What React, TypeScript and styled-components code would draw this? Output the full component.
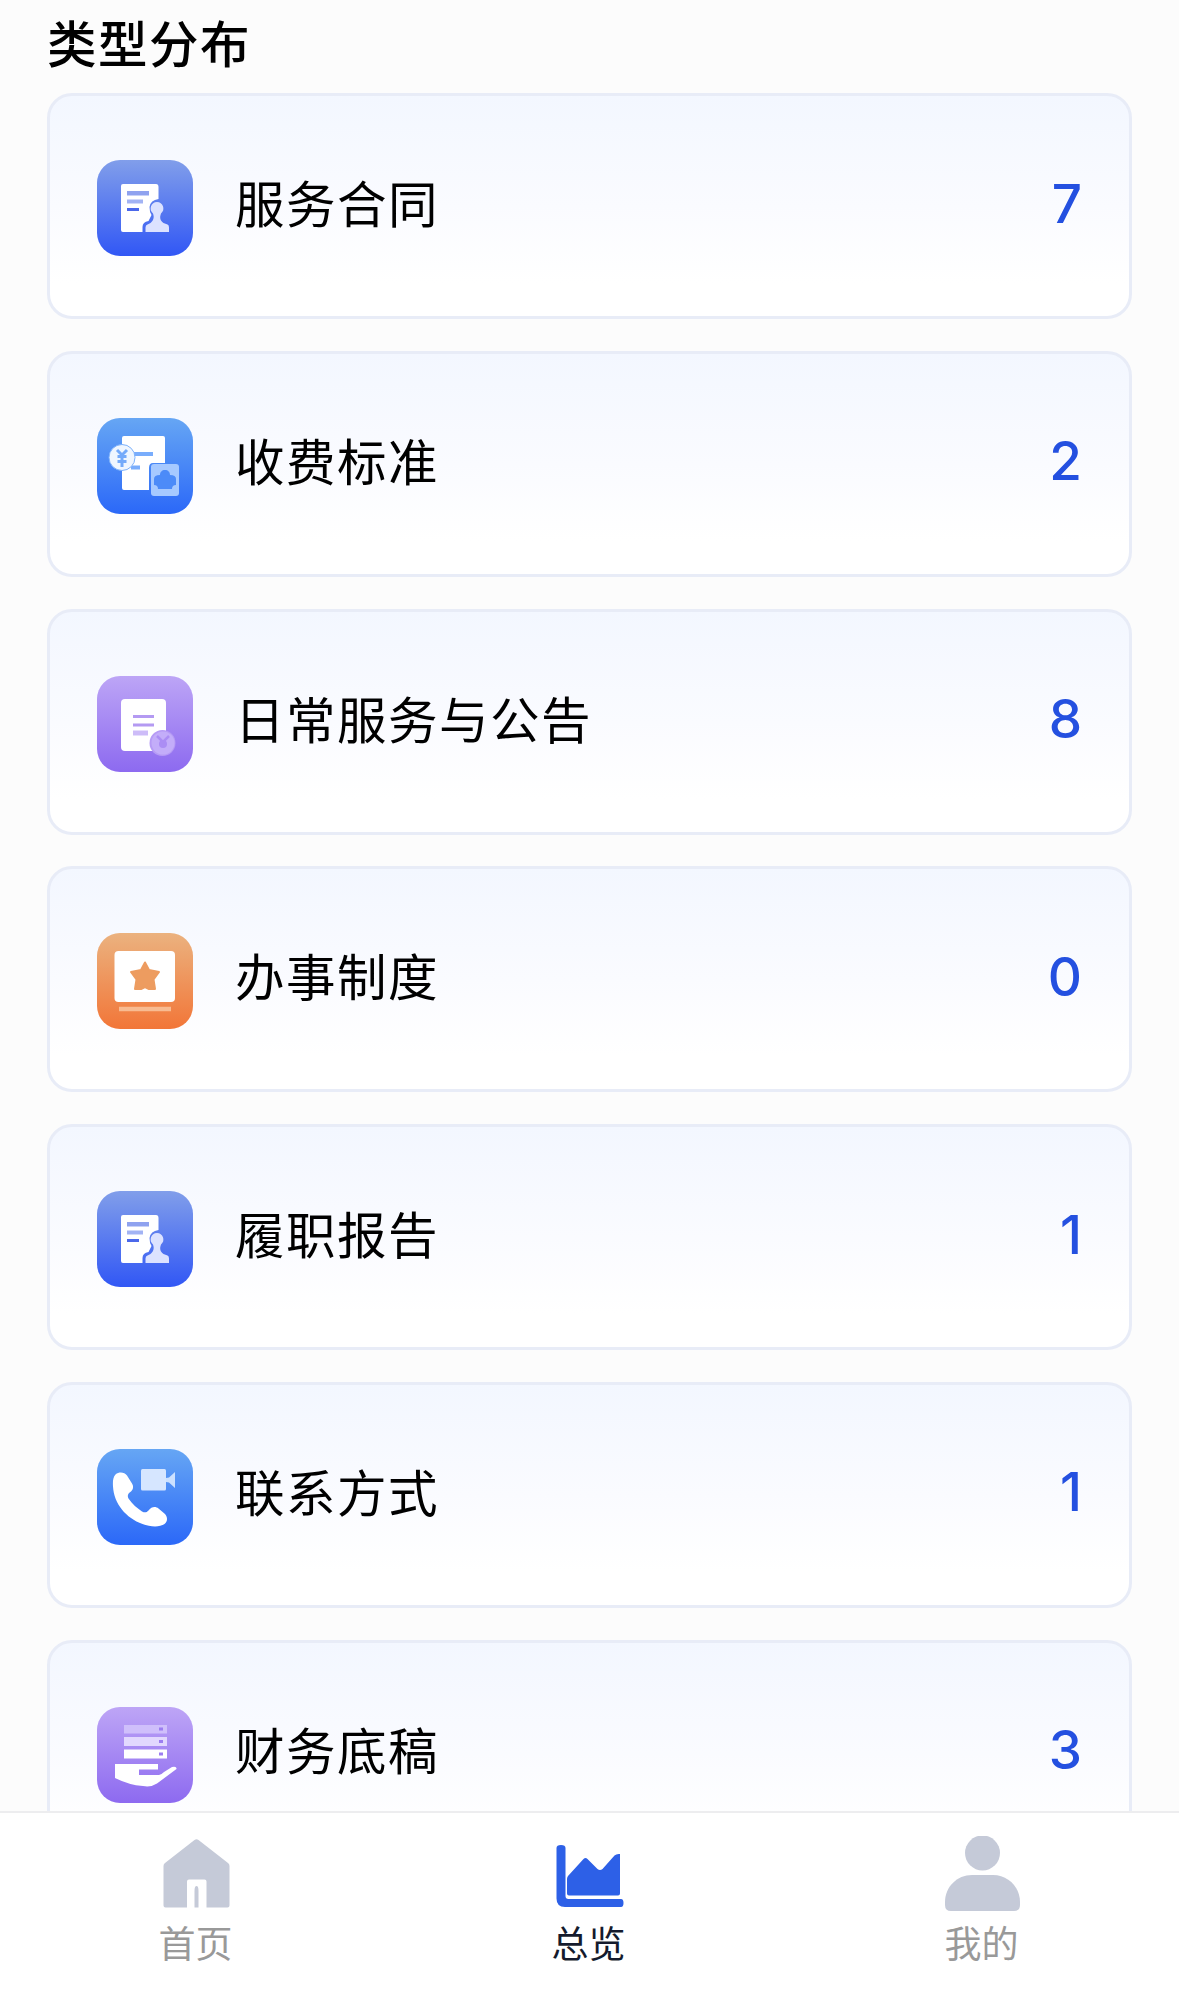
import React from "react";
import styled, { createGlobalStyle } from "styled-components";

const GlobalStyle = createGlobalStyle`
  * { box-sizing: border-box; }
  body {
    margin: 0;
    background: #fcfcfc;
    font-family: "Noto Sans CJK SC", sans-serif;
    overflow: hidden;
  }
`;

const Page = styled.div`
  display: flex;
  flex-direction: column;
  height: 1997px;
  overflow: hidden;
`;

const Content = styled.main`
  flex: 1;
  min-height: 0;
  overflow: hidden;
  padding: 0 47px;
`;

const Title = styled.h1`
  margin: 0;
  height: 93px;
  padding-top: 6px;
  font-size: 49.5px;
  font-weight: 500;
  line-height: 72px;
  letter-spacing: 1.5px;
  color: #000;
`;

const List = styled.div`
  display: flex;
  flex-direction: column;
  gap: 31.75px;
`;

const Card = styled.section`
  display: flex;
  flex: none;
  align-items: center;
  height: 226px;
  padding: 0 47px 0 47px;
  border: 3px solid #e8ecf7;
  border-radius: 25px;
  background: linear-gradient(180deg, #f3f7ff 0%, #fafbff 50%, #ffffff 85%);
`;

const Tile = styled.div<{ $from: string; $to: string }>`
  width: 96px;
  height: 96px;
  margin-top: 4px;
  border-radius: 23px;
  background: linear-gradient(180deg, ${(p) => p.$from}, ${(p) => p.$to});
  svg { display: block; }
`;

const Label = styled.span`
  flex: 1;
  margin: -8px 0 0 42px;
  font-size: 49.5px;
  line-height: 72px;
  letter-spacing: 1.5px;
  color: #000;
`;

const Count = styled.span`
  margin-top: -5px;
  font-family: Inter, sans-serif;
  font-size: 53px;
  font-weight: 500;
  line-height: 64px;
  color: #2450e0;
`;

const TabBar = styled.nav`
  display: flex;
  flex: none;
  height: 186px;
  border-top: 2px solid #ededef;
  background: #fff;
`;

const Tab = styled.div<{ $active?: boolean }>`
  display: flex;
  flex: 1;
  flex-direction: column;
  align-items: center;
  padding-top: 23px;
  font-size: 37px;
  line-height: 54px;
  color: ${(p) => (p.$active ? "#151b2d" : "#999999")};
  svg { display: block; margin-bottom: 4px; }
`;

const TabName = styled.span`
  margin-right: 2px;
`;

const Glyph = ({ children }: { children: React.ReactNode }) => (
  <svg width="96" height="96" viewBox="0 0 96 96" fill="none">{children}</svg>
);

const ContractGlyph = () => (
  <Glyph>
    <path fill="#fff" d="M26 24h33q2.500 0 2.500 3v12q-8 1-9 8 0 5 2 8l-3 6q-6 1-6 6v5H26q-2 0-2-2V26q0-2 2-2Z" />
    <path fill="#8fa2ef" d="M30 31h22v4.500H30z" />
    <path fill="#a2b3f4" d="M30 39.500h16v4H30z" />
    <path fill="#4b68ea" d="M30 48h12v3H30z" />
    <path fill="#dce2ff" d="M60 42a6.500 6.500 0 0 1 4 11.500c-1.500 4-1 7 2.500 9.500l4 1.500q1.500.5 1.500 3v4.500H48.500v-4.500q0-2.500 2-3l3-1.500c3-2.500 4-5.500 2.500-9.500A6.500 6.500 0 0 1 60 42Z" />
  </Glyph>
);

const FeeGlyph = () => (
  <Glyph>
    <path fill="#fff" d="M27 18h39q2 0 2 2v25H56q-4 0-4 5v22H27q-2 0-2-2V20q0-2 2-2Z" />
    <path stroke="#79adfc" strokeWidth="4" d="M36 36h20M34 49.500h9" />
    <circle cx="25" cy="39.500" r="13" fill="#eff6ff" stroke="#7db1fb" strokeWidth="1" />
    <path stroke="#74aafa" strokeWidth="3" d="m20 32 5 5 5-5M25 36v13M20.500 38.500h9M20.500 43.500h9" />
    <rect x="54" y="46" width="28" height="32" rx="3" fill="#a6c9ff" />
    <path fill="#4c8bf8" d="M68 52c3 0 5 2 5 5q6 0 6 4v6q-4 0-4 4H61q0-4-4-4v-6q0-4 6-4c0-3 2-5 5-5Z" />
  </Glyph>
);

const NoticeGlyph = () => (
  <Glyph>
    <rect x="24" y="23" width="45" height="52" rx="4" fill="#fff" />
    <path stroke="#b49af2" strokeWidth="3" d="M36 40.500h21M36 49h21" />
    <path stroke="#cdbcf8" strokeWidth="5" d="M36 57h15" />
    <circle cx="65.500" cy="67" r="13" fill="#b69bf5" />
    <circle cx="66" cy="67" r="11.500" fill="#c3adf9" />
    <path stroke="#ab8df4" strokeWidth="2.500" d="m60 60 6 6 6-6" />
    <circle cx="66" cy="68" r="4" fill="#ab8df4" />
  </Glyph>
);

const RuleGlyph = () => (
  <Glyph>
    <rect x="17.500" y="18" width="60.500" height="51" rx="4" fill="#fff" />
    <path fill="#ed9c60" stroke="#ed9c60" strokeWidth="2" strokeLinejoin="round" d="m48 29.500 4 7.500 10 2-5.500 7.500 1.500 9.500h-6l-4-2-4 2h-6l1.500-9.500L34 39l10-2Z" />
    <path stroke="#f8bb91" strokeWidth="4.500" d="M22 76h52" />
  </Glyph>
);

const PhoneGlyph = () => (
  <Glyph>
    <path fill="#fff" d="M18.500 25.500c3.500-3 9-2.500 11.500 1l5 8c2 3 1 6-1 8-3 2-4 4-2.500 7 4 6 8.500 9.500 13.500 13 3 1.500 4.500 1 6.500-1 3-4 7-4.500 10-2l6.500 5.500c3 3.500 2.500 7.500-.5 10-5 3.500-14 3-22 0C29 69 17 55 16 37.500c-.3-5 0-9.500 2.500-12Z" />
    <rect x="44" y="20" width="25" height="21.500" rx="1.500" fill="#d6e6ff" />
    <path fill="#cce1ff" d="m69 29 3-.5 6-5.500v16l-6-5.500-3-.5Z" />
  </Glyph>
);

const FinanceGlyph = () => (
  <Glyph>
    <rect x="27" y="18" width="43" height="8.500" fill="#cfbffb" />
    <rect x="27" y="30" width="43" height="9" fill="#e2d8fe" />
    <rect x="27" y="42.500" width="43" height="9" fill="#fff" />
    <path fill="#9c7df1" d="M62 20.500h4v3h-4zM62 33h4v3h-4zM62 45.500h4v3h-4z" />
    <path fill="#fff" d="M18 57h43v5.500H42V68h20q2 0 5-3l8-5q5-1 4.500 2L60 76.500q-6 4-14 2.500-14-1-28-8Z" />
  </Glyph>
);

const HomeIcon = () => (
  <svg width="75" height="75" viewBox="0 0 75 75">
    <path fill="#c5cad8" d="M35.500 4q2-1.500 4 0L69 27q1.500 1 1.500 3v39.500q0 2-2 2H47.500v-26q0-2-2-2H30q-2 0-2 2v26H6.500q-2 0-2-2V30q0-2 1.500-3Z" />
    <path fill="#c5cad8" d="M35.500 71.500V55q0-5 2-5t2 5v16.500Z" />
  </svg>
);

const ChartIcon = () => (
  <svg width="75" height="75" viewBox="0 0 75 75">
    <path fill="#2d60e7" d="M4.500 12q0-3 4.500-3t4.500 3v48q0 3 3 3H69q2.500 0 2.500 4T69 71H13q-8.500 0-8.500-8.500Z" />
    <path fill="#2d60e7" d="M15 43q0-1.500 1-3l15.500-17q2-2 4 0l10 10q2.500 2 5 0l12-13.500q2-2 5.500-1.500V57.500q0 2-2 2H17q-2 0-2-2Z" />
  </svg>
);

const UserIcon = () => (
  <svg width="75" height="75" viewBox="0 0 75 75">
    <circle cx="37.500" cy="17" r="17.500" fill="#c5cad8" />
    <path fill="#c5cad8" d="M27 39h21c15 0 27 12 27 27v3q0 6-6 6H6q-6 0-6-6v-3C0 51 12 39 27 39Z" />
  </svg>
);

const INDIGO = ["#819eea", "#3157f5"];
const BLUE = ["#66a6f4", "#2b68f8"];
const PURPLE = ["#bda5f6", "#8d6af0"];
const ORANGE = ["#ebb27f", "#f27638"];

const categories = [
  { label: "服务合同", count: 7, colors: INDIGO, Icon: ContractGlyph },
  { label: "收费标准", count: 2, colors: BLUE, Icon: FeeGlyph },
  { label: "日常服务与公告", count: 8, colors: PURPLE, Icon: NoticeGlyph },
  { label: "办事制度", count: 0, colors: ORANGE, Icon: RuleGlyph },
  { label: "履职报告", count: 1, colors: INDIGO, Icon: ContractGlyph },
  { label: "联系方式", count: 1, colors: BLUE, Icon: PhoneGlyph },
  { label: "财务底稿", count: 3, colors: PURPLE, Icon: FinanceGlyph },
];

export default function App() {
  return (
    <Page>
      <GlobalStyle />
      <Content>
        <Title>类型分布</Title>
        <List>
          {categories.map(({ label, count, colors, Icon }) => (
            <Card key={label}>
              <Tile $from={colors[0]} $to={colors[1]}><Icon /></Tile>
              <Label>{label}</Label>
              <Count>{count}</Count>
            </Card>
          ))}
        </List>
      </Content>
      <TabBar>
        <Tab><HomeIcon /><TabName>首页</TabName></Tab>
        <Tab $active><ChartIcon /><TabName>总览</TabName></Tab>
        <Tab><UserIcon /><TabName>我的</TabName></Tab>
      </TabBar>
    </Page>
  );
}
